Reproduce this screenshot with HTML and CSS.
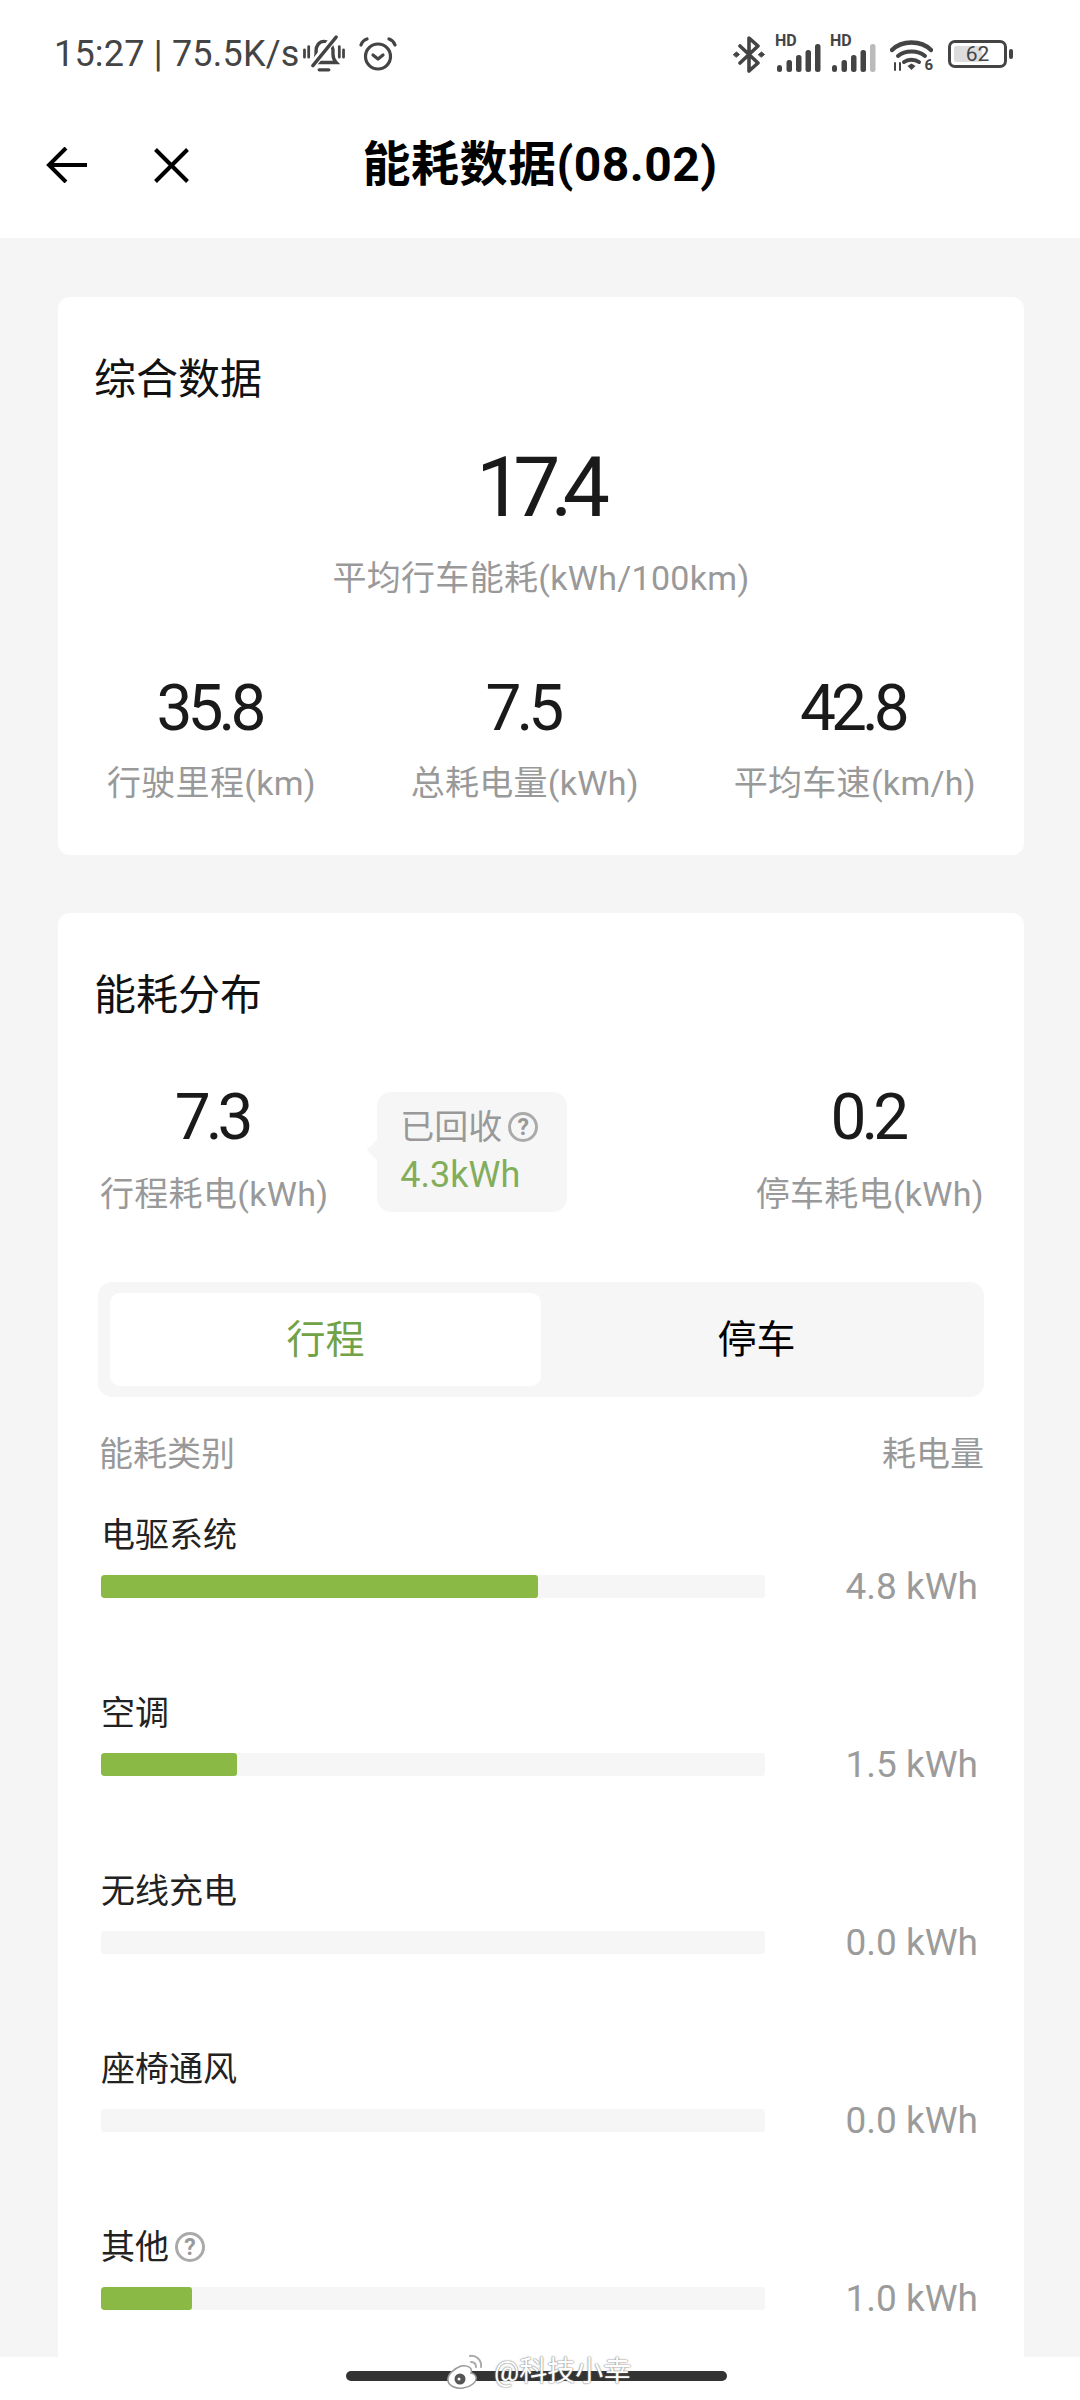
FILE: index.html
```html
<!DOCTYPE html>
<html lang="zh-CN">
<head>
<meta charset="UTF-8" />
<meta name="viewport" content="width=device-width, initial-scale=1.0"/>
<title>能耗数据</title>
<link rel="stylesheet" href="styles.css">
</head>
<body>

<div id="statusBar">
  <div class="statusLeft">
    <span class="statusText">15:27 | 75.5K/s</span>
    <svg class="bellIcon" width="44" height="38" viewBox="0 0 41 36" fill="none" stroke="#444" stroke-width="3.2" stroke-linecap="round">
      <path d="M10 26c2-2 3-4 3-8v-3c0-5 3-9 7.500-9s8 3 8.500 8v4c0 4 1 6 3 8z"/>
      <path d="M16 33h9"/>
      <path d="M31 2 L9 29" stroke="#fff" stroke-width="7"/>
      <path d="M32 2 L10 29"/>
      <path d="M2 14v7M6 11v10M35 11v10M39 14v7" stroke-width="2.600"/>
    </svg>
    <svg class="alarmIcon" width="38" height="34" viewBox="0 0 38 34" fill="none" stroke="#444" stroke-width="3.200" stroke-linecap="round" stroke-linejoin="round">
      <circle cx="19" cy="19.500" r="12.500"/>
      <path d="M2 8c1-3 3-5 6-6M36 8c-1-3-3-5-6-6"/>
      <path d="M14 18l5 4 5-4"/>
    </svg>
  </div>
  <div class="statusRight">
    <svg class="btIcon" width="33" height="37" viewBox="0 0 33 37" fill="none" stroke="#444" stroke-width="3.600" stroke-linecap="round" stroke-linejoin="round">
      <path d="M7 10l18 17-9 8V2l9 8L7 27"/>
      <path d="M0.500 18.500l3-2.500 3 2.500-3 2.500zM25.500 18.500l3-2.500 3 2.500-3 2.500z" fill="#444" stroke-width="1"/>
    </svg>
    <div class="signal">
      <span class="hd">HD</span>
      <svg width="44" height="29" viewBox="0 0 44 29" fill="#444">
        <rect x="0" y="21" width="5" height="7" rx="2.500"/>
        <rect x="9.500" y="16" width="5.500" height="12" rx="2.500"/>
        <rect x="19" y="11" width="5.500" height="17" rx="2.500"/>
        <rect x="28.500" y="6" width="5.500" height="22" rx="2.500"/>
        <rect x="38" y="0" width="5.500" height="28" rx="2.500"/>
      </svg>
    </div>
    <div class="signal">
      <span class="hd">HD</span>
      <svg width="44" height="29" viewBox="0 0 44 29" fill="#444">
        <rect x="0" y="21" width="5" height="7" rx="2.500"/>
        <rect x="9.500" y="16" width="5.500" height="12" rx="2.500"/>
        <rect x="19" y="11" width="5.500" height="17" rx="2.500"/>
        <rect x="28.500" y="6" width="5.500" height="22" rx="2.500"/>
        <rect x="38" y="0" width="5.500" height="28" fill="#bbb" rx="2.500"/>
      </svg>
    </div>
    <div class="wifi">
      <svg width="43" height="33" viewBox="0 0 43 33" fill="none" stroke="#444" stroke-width="4" stroke-linecap="round">
        <path d="M2 12C12 2 31 2 41 12" stroke-width="4.500"/>
        <path d="M8 18c7-6 20-6 27 0"/>
        <path d="M14 24c4-3 11-3 15 0"/>
        <path d="M17.500 28l4-2.500 4 2.500-4 4z" fill="#444" stroke="none"/>
        <path d="M5 25v7M10 25v7" stroke-width="2"/>
      </svg>
      <span class="wifiSix">6</span>
    </div>
    <div class="battery">
      <div class="batteryBody"><span class="batteryFill"></span><span class="batteryText">62</span></div>
      <span class="batteryNub"></span>
    </div>
  </div>
</div>

<div id="appBar">
  <div class="navIcons">
    <svg width="42" height="36" viewBox="0 0 42 36" fill="none" stroke="#000" stroke-width="4">
      <path d="M41 18H3M20 1L3 18l17 17"/>
    </svg>
    <svg width="35" height="35" viewBox="0 0 35 35" fill="none" stroke="#000" stroke-width="4">
      <path d="M1.500 1.500l32 32M33.500 1.500l-32 32"/>
    </svg>
  </div>
  <div class="pageTitle">能耗数据(08.02)</div>
</div>

<div id="content">
  <section class="card">
    <h2 class="cardTitle">综合数据</h2>
    <div class="mainValue">17.4</div>
    <div class="label mainLabel">平均行车能耗(kWh/100km)</div>
    <div class="statsRow">
      <div class="stat">
        <div class="value">35.8</div>
        <div class="label">行驶里程(km)</div>
      </div>
      <div class="stat">
        <div class="value">7.5</div>
        <div class="label">总耗电量(kWh)</div>
      </div>
      <div class="stat">
        <div class="value">42.8</div>
        <div class="label">平均车速(km/h)</div>
      </div>
    </div>
  </section>

  <section class="card cardFill">
    <h2 class="cardTitle">能耗分布</h2>
    <div class="splitRow">
      <div class="stat">
        <div class="value">7.3</div>
        <div class="label">行程耗电(kWh)</div>
      </div>
      <div class="bubble">
        <div class="bubbleTitle">已回收<span class="help">?</span></div>
        <div class="bubbleValue">4.3kWh</div>
      </div>
      <div class="stat parkStat">
        <div class="value">0.2</div>
        <div class="label">停车耗电(kWh)</div>
      </div>
    </div>

    <div class="tabs">
      <div class="tab active">行程</div>
      <div class="tab">停车</div>
    </div>

    <div class="tableHead">
      <span>能耗类别</span>
      <span>耗电量</span>
    </div>

    <div class="row">
      <div class="rowName">电驱系统</div>
      <div class="rowData">
        <div class="bar"><div class="barFill" style="width: 65.8%"></div></div>
        <div class="rowValue">4.8 kWh</div>
      </div>
    </div>
    <div class="row">
      <div class="rowName">空调</div>
      <div class="rowData">
        <div class="bar"><div class="barFill" style="width: 20.5%"></div></div>
        <div class="rowValue">1.5 kWh</div>
      </div>
    </div>
    <div class="row">
      <div class="rowName">无线充电</div>
      <div class="rowData">
        <div class="bar"></div>
        <div class="rowValue">0.0 kWh</div>
      </div>
    </div>
    <div class="row">
      <div class="rowName">座椅通风</div>
      <div class="rowData">
        <div class="bar"></div>
        <div class="rowValue">0.0 kWh</div>
      </div>
    </div>
    <div class="row">
      <div class="rowName">其他<span class="help">?</span></div>
      <div class="rowData">
        <div class="bar"><div class="barFill" style="width: 13.7%"></div></div>
        <div class="rowValue">1.0 kWh</div>
      </div>
    </div>
  </section>
</div>

<div id="homeArea">
  <div class="homeBar"></div>
</div>

<div class="watermark">
  <svg width="38" height="36" viewBox="0 0 38 36" fill="none">
    <path d="M15 12C7 15 1 21 2 27c1 5 8 8 15 7 8-1 14-6 13-11-1-3-4-4-5-4 2-5-3-8-10-7z" fill="#fff" stroke="#999" stroke-width="1.500"/>
    <circle cx="14" cy="25" r="5.500" fill="#555"/>
    <circle cx="13" cy="25" r="1.500" fill="#fff"/>
    <path d="M24 2c6-1 12 4 11 11M25 8c3 0 5 2 5 5" stroke="#aaa" stroke-width="2" stroke-linecap="round"/>
  </svg>
  <span>@科技小幸</span>
</div>

</body>
</html>
```

FILE: styles.css
```css
* {
  box-sizing: border-box;
}
body {
  position: relative;
  width: 1080px;
  height: 2400px;
  margin: 0;
  overflow: hidden;
  background-color: #fff;
  font-family: Roboto, "Noto Sans CJK SC", sans-serif;
  color: #1a1a1a;
}

/* status bar */
#statusBar {
  height: 92px;
  padding: 16px 67px 0 54px;
  display: flex;
  justify-content: space-between;
  align-items: center;
  color: #444;
}
.statusLeft,
.statusRight {
  display: flex;
  align-items: center;
}
.statusText {
  font-size: 36px;
  line-height: 40px;
  letter-spacing: 0.2px;
}
.bellIcon {
  margin-left: 2px;
}
.alarmIcon {
  margin-left: 13px;
}
.signal {
  position: relative;
  width: 45px;
  height: 37px;
  margin-left: 11px;
  display: flex;
  align-items: flex-end;
}
.statusRight .signal:nth-child(3) {
  margin-left: 10px;
}
.hd {
  position: absolute;
  left: -2px;
  top: -3px;
  font-size: 16px;
  line-height: 16px;
  font-weight: 700;
}
.wifi {
  position: relative;
  width: 43px;
  height: 33px;
  margin-left: 13px;
}
.wifiSix {
  position: absolute;
  right: 0;
  bottom: -2px;
  font-size: 15px;
  line-height: 15px;
  font-weight: 700;
}
.battery {
  display: flex;
  align-items: center;
  margin-left: 15px;
}
.batteryBody {
  position: relative;
  width: 59px;
  height: 28px;
  border: 3px solid #444;
  border-radius: 7px;
  display: flex;
  align-items: center;
  justify-content: center;
}
.batteryFill {
  position: absolute;
  left: 3px;
  top: 3px;
  bottom: 3px;
  width: 28px;
  background-color: #ddd;
  border-radius: 2px;
}
.batteryText {
  position: relative;
  font-size: 21px;
  line-height: 22px;
}
.batteryNub {
  width: 4px;
  height: 10px;
  margin-left: 2px;
  background-color: #444;
  border-radius: 2px;
}

/* app bar */
#appBar {
  position: relative;
  height: 146px;
  padding-left: 46px;
  display: flex;
  align-items: center;
}
.navIcons {
  display: flex;
  align-items: center;
  gap: 66px;
}
.pageTitle {
  position: absolute;
  left: 0;
  right: 0;
  text-align: center;
  font-size: 48px;
  line-height: 54px;
  letter-spacing: 0.5px;
  font-weight: 700;
  color: #000;
}

/* content */
#content {
  height: 2119px;
  padding: 59px 56px 0 58px;
  background-color: #f5f5f5;
  display: flex;
  flex-direction: column;
  gap: 58px;
  overflow: hidden;
}
.card {
  background-color: #fff;
  border-radius: 12px;
  padding: 60px 36px 52px 36px;
}
.cardFill {
  flex: 1;
  padding-left: 42px;
  padding-right: 40px;
}
.cardFill .cardTitle {
  margin-left: -6px;
}
.cardTitle {
  margin: 0;
  font-size: 42px;
  line-height: 46px;
  font-weight: 400;
  color: #111;
}
.mainValue {
  margin-top: 43px;
  padding-right: 6px;
  font-size: 84px;
  line-height: 84px;
  text-align: center;
  letter-spacing: -10px;
  color: #1a1a1a;
}
.label {
  font-size: 34px;
  line-height: 40px;
  color: #999;
  white-space: nowrap;
  letter-spacing: 0.3px;
}
.mainLabel {
  margin-top: 28px;
  text-align: center;
}
.statsRow {
  margin-top: 79px;
  padding: 0 12px 0 13px;
  display: flex;
  justify-content: space-between;
}
.stat {
  text-align: center;
}
.value {
  padding-right: 5px;
  font-size: 64px;
  line-height: 64px;
  letter-spacing: -5px;
  color: #1a1a1a;
}
.stat .label {
  margin-top: 22px;
}

/* split row with recovered bubble */
.splitRow {
  margin-top: 67px;
  display: flex;
  align-items: flex-start;
}
.splitRow .label {
  margin-top: 24px;
}
.parkStat {
  margin-left: auto;
}
.bubble {
  position: relative;
  width: 190px;
  height: 120px;
  margin: 6px 0 0 49px;
  padding: 15px 0 0 23px;
  background-color: #f6f6f6;
  border-radius: 14px;
}
.bubble::before {
  content: "";
  position: absolute;
  left: -7px;
  top: 50px;
  width: 16px;
  height: 16px;
  background-color: #f6f6f6;
  transform: rotate(45deg);
}
.bubbleTitle {
  position: relative;
  display: flex;
  align-items: center;
  font-size: 34px;
  line-height: 40px;
  color: #999;
}
.bubbleValue {
  position: relative;
  margin-top: 8px;
  font-size: 36px;
  line-height: 40px;
  color: #82ad5a;
}
.help {
  width: 30px;
  height: 30px;
  margin-left: 6px;
  border: 3px solid #aaa;
  border-radius: 50%;
  display: inline-flex;
  align-items: center;
  justify-content: center;
  font-size: 23px;
  line-height: 23px;
  font-weight: 700;
  color: #999;
}

/* tabs */
.tabs {
  height: 115px;
  margin: 68px 0 0 -2px;
  padding: 11px 12px;
  background-color: #f6f6f6;
  border-radius: 14px;
  display: flex;
}
.tab {
  flex: 1;
  padding-bottom: 8px;
  display: flex;
  align-items: center;
  justify-content: center;
  font-size: 39px;
  color: #000;
  border-radius: 10px;
}
.tab.active {
  background-color: #fff;
  color: #72a246;
}

/* usage table */
.tableHead {
  margin: 37px 0 41px -1px;
  display: flex;
  justify-content: space-between;
  font-size: 34px;
  line-height: 40px;
  color: #999;
}
.row {
  margin: 0 6px 87px 1px;
}
.rowName {
  display: flex;
  align-items: center;
  height: 40px;
  font-size: 34px;
  line-height: 40px;
  color: #222;
}
.rowData {
  margin-top: 12px;
  height: 39px;
  display: flex;
  align-items: center;
}
.bar {
  width: 664px;
  height: 23px;
  background-color: #f6f6f6;
  border-radius: 3px;
  overflow: hidden;
}
.barFill {
  height: 100%;
  background-color: #8ab945;
  border-radius: 3px;
}
.rowValue {
  flex: 1;
  text-align: right;
  font-size: 37px;
  line-height: 39px;
  color: #9b9b9b;
}

/* bottom gesture bar */
#homeArea {
  height: 43px;
  padding: 14px 0 0 346px;
}
.homeBar {
  width: 381px;
  height: 10px;
  background-color: #333;
  border-radius: 5px;
}
.watermark {
  position: absolute;
  left: 446px;
  top: 2354px;
  display: flex;
  align-items: center;
  gap: 10px;
  font-size: 28px;
  line-height: 36px;
  color: #fff;
  text-shadow: 0 0 2px #777, 0 0 1px #777;
}
```
